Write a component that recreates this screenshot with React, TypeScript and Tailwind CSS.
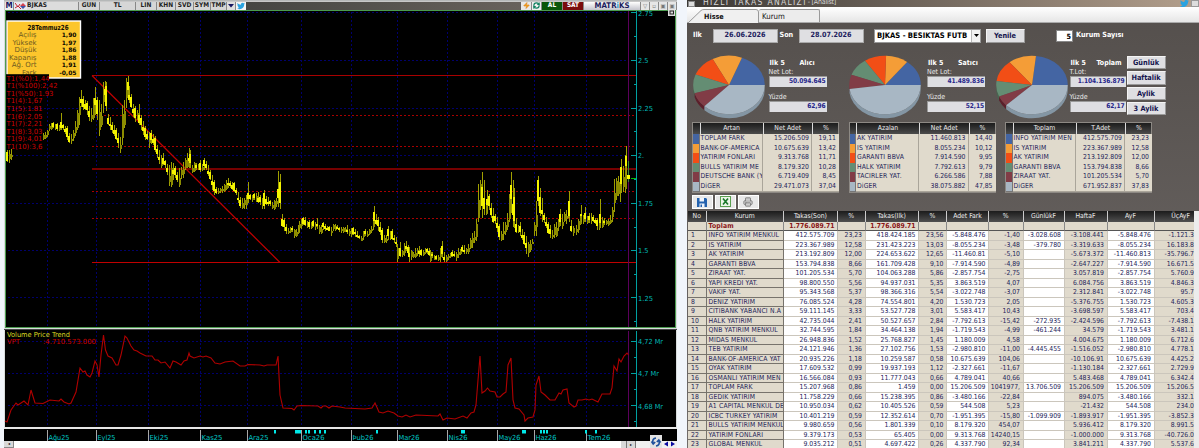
import React from "react";
import { Printer, RefreshCw, Zap } from "lucide-react";
import { FaTwitter } from "react-icons/fa";

// x, high, low in chart pixels
const CANDLES = `7 150 162;9 150 163;11 149 160;43 133 140;45 132 139;47 130 137;49 124 131;51 123 130;53 122 128;55 124 130;57 123 131;59 125 131;61 113 130;63 124 130;65 126 134;67 126 140;69 133 143;71 134 144;73 130 141;75 121 136;77 110 130;79 97 125;81 90 107;83 96 110;85 100 110;87 101 115;89 106 121;91 108 122;93 98 120;95 87 115;97 97 120;99 100 136;101 104 127;103 82 113;105 81 100;106 82 111;108 114 125;110 117 130;112 122 133;114 125 136;116 128 140;118 133 148;120 137 153;122 105 145;124 100 128;126 78 108;128 76 95;129 86 103;131 94 108;133 104 117;135 106 122;137 110 120;139 104 125;141 115 130;143 121 135;145 126 140;147 131 140;149 132 148;151 130 144;153 134 145;155 136 152;157 145 158;159 150 164;161 155 168;163 153 165;165 160 168;167 164 175;169 165 186;171 162 187;173 163 180;175 166 178;177 172 182;179 168 187;181 167 179;183 162 178;185 158 170;187 153 168;189 148 168;190 150 168;192 165 173;194 162 172;196 163 170;198 164 170;200 160 172;202 164 171;204 158 170;206 161 170;208 165 176;210 170 180;212 175 190;214 180 195;216 187 194;218 188 194;220 188 193;222 186 193;224 184 192;226 180 190;228 178 188;230 181 188;232 182 190;234 182 192;236 188 195;238 192 203;240 197 208;242 198 209;244 198 209;246 195 209;248 182 203;250 194 200;252 195 202;254 193 200;256 193 202;258 192 203;260 195 205;262 198 209;264 190 209;266 196 205;268 197 206;270 200 206;272 202 209;274 200 210;276 198 207;278 171 207;280 174 209;282 214 227;284 218 231;286 224 234;288 228 234;290 227 233;292 226 232;294 229 238;296 229 237;298 225 234;299 221 232;301 219 229;303 217 225;305 217 226;307 221 228;309 220 229;311 222 229;313 220 227;315 222 230;317 218 229;319 225 234;321 225 234;323 222 230;325 224 231;327 226 230;329 226 231;331 227 236;333 224 231;335 224 231;337 225 229;339 227 232;341 227 233;343 227 233;345 227 232;347 225 234;349 229 236;351 228 237;353 227 235;355 229 237;357 231 238;359 235 239;361 236 241;363 231 240;365 229 236;367 231 237;369 229 235;371 226 233;373 220 230;374 206 224;376 214 225;378 217 231;380 222 235;382 228 243;384 235 243;386 235 243;388 226 240;390 231 240;392 229 240;394 235 243;396 237 247;397 244 262;400 242 257;402 250 257;404 243 256;406 241 251;408 245 254;409 247 262;411 250 260;413 252 258;415 248 258;417 248 256;419 246 257;421 249 256;423 250 256;425 248 254;427 248 254;429 248 256;430 250 262;432 252 258;434 255 260;436 255 260;438 255 261;440 248 262;442 241 258;444 252 262;446 255 262;448 254 260;450 253 258;452 250 257;454 251 257;456 252 261;458 248 258;460 249 255;462 245 252;464 245 254;466 248 254;468 244 254;470 238 249;472 233 248;474 231 243;476 219 241;478 184 222;480 180 210;482 172 218;484 180 215;486 201 215;487 190 213;489 194 210;491 203 218;493 208 223;495 214 224;497 217 232;499 224 240;501 231 241;503 222 240;505 222 235;507 213 230;509 194 222;511 172 213;513 180 227;514 188 228;516 218 233;518 225 233;520 222 236;522 229 240;524 232 245;526 236 254;528 242 257;530 240 252;532 239 244;534 222 236;536 201 236;538 176 206;540 188 216;542 198 222;544 213 223;546 217 228;548 222 234;550 225 238;552 230 239;554 224 238;556 222 237;558 219 231;560 209 226;562 214 229;564 212 222;566 210 224;568 205 218;569 191 222;571 220 232;573 226 236;576 225 235;578 219 233;580 215 225;581 205 222;583 215 224;585 207 222;587 216 224;589 213 223;591 213 224;593 215 222;595 218 224;597 218 230;599 222 230;600 199 228;602 217 228;604 218 225;606 220 225;608 219 226;610 215 224;612 207 222;614 179 212;616 178 200;618 176 196;620 170 202;621 159 193;623 166 192;625 155 193;626 146 176;628 174 180`
  .split(";")
  .map((c) => c.split(" ").map(Number));

const VPT =
  "5,421 7,422 11,410 16,403 18,405 24,401 28,405 31,390 35,403 43,403.5 50,400 59,401 61,399 64,402 69,404 71,403 76,392 80,368 83,372 85,371 87,375 90,377 92,373 95,361 97,365 99,377 101,355 103.5,335 105.5,350 108,356 112,358 116,365 118,365 121,355 125,336 127,338 131,346 134,350 137,351 140,353 146,356 152,356 155,360 158,360 161,363 165,362 170,368 173,361 176,362 181,365 184,361 187,360 189,353 190,356 194,358 200,356 203,357 206,356 211,358 215,363 220,364 225,362 233,361 240,366 245,366 248,364.5 260,365 264,366 267,365 276,365 278,356 280,395 283,408 292,408.5 294,410 297,406 301,405.5 318,406 321,408 323,406 326,406 329,408 332,406 340,407 345,408 365,409 372,408 375,403 379,412 383,413 388,411 394,413 398,416 402,417 406,415 410,417 416,415 438,416 440,414 443,420 447,418 455,419 463,416 467,418 471,413 474,412 476,405 478,380 480,356 482,393 485,391 487.5,388 490,391 495,392 497,397 500,397 503,394 506,392 508,365 511,358 513,400 515,408 519,409 524,415 525,421 528,418 533,417 535,410 536,385 539,376 541,392 545,395 550,400 555,400 559,393 561,394 563,390 567,389 569,403 574,407 576,406 578,400 582,400 586,399 589,400 592,399 598,402 602,394 610,394 612,388 614,366 617,371 619,359 621,362 624,356 627,353 628.5,355";

const MONTHS: [number, string, number][] = [
  [47, "Ağu25", 21], [96, "Eyl25", 18], [148, "Eki25", 19], [200, "Kas25", 21],
  [247, "Ara25", 20], [301, "Oca26", 22], [351, "Þub26", 21], [397, "Mar26", 21],
  [447, "Nis26", 19], [497, "May26", 22], [534, "Haz26", 21], [586, "Tem26", 23],
];

const EVENTS = [
  [274, 2], [295, 6], [305, 2], [308, 2], [314, 2], [319, 2], [324, 2], [376, 2], [461, 4],
  [522, 4], [540, 2], [543, 2], [546, 2], [585, 2], [595, 2],
];

const LEVELS: [string, number][] = [
  ["T1(%0):1,44", 43], ["T1(%100):2,42", 51], ["T1(%50):1.93", 47], ["T1(4):1,67", 36], ["T1(5):1.81", 36],
  ["T1(6):2,05", 36], ["T1(7):2,21", 36], ["T1(8):3,03", 36], ["T1(9):4,01", 36], ["T1(10):3,6", 36],
];

const OHLC: [string, string][] = [
  ["Açılış", "1,90"], ["Yüksek", "1,97"], ["Düşük", "1,86"], ["Kapanış", "1,88"], ["Ağ. Ort", "1,91"], ["Fark", "-0,05"],
];

const COLORS = ["#4465a3", "#f49d37", "#f24e16", "#648d73", "#813c46", "#a8b7c4"];
const DARK = ["#2f4a80", "#b87326", "#b0360c", "#46664f", "#5c1f2b", "#8496a4"];

const GROUPS = [
  {
    head: ["Artan", "Net Adet", "%"], side: "Alıcı", lot: "Net Lot:", total: "50.094.645", pct: "62,96",
    rows: [["TOPLAM FARK", "15.206.509", "19,11"], ["BANK-OF-AMERICA", "10.675.639", "13,42"], ["YATIRIM FONLARI", "9.313.768", "11,71"], ["BULLS YATIRIM ME", "8.179.320", "10,28"], ["DEUTSCHE BANK (Y", "6.719.409", "8,45"], ["DiGER", "29.471.073", "37,04"]],
  },
  {
    head: ["Azalan", "Net Adet", "%"], side: "Satıcı", lot: "Net Lot:", total: "41.489.836", pct: "52,15",
    rows: [["AK YATIRIM", "11.460.813", "14,40"], ["IS YATIRIM", "8.055.234", "10,12"], ["GARANTI BBVA", "7.914.590", "9,95"], ["HALK YATIRIM", "7.792.613", "9,79"], ["TACIRLER YAT.", "6.266.586", "7,88"], ["DiGER", "38.075.882", "47,85"]],
  },
  {
    head: ["Toplam", "T.Adet", "%"], side: "Toplam", lot: "T.Lot:", total: "1.104.136.879", pct: "62,17",
    rows: [["INFO YATIRIM MEN", "412.575.709", "23,23"], ["IS YATIRIM", "223.367.989", "12,58"], ["AK YATIRIM", "213.192.809", "12,00"], ["GARANTI BBVA", "153.794.838", "8,66"], ["ZIRAAT YAT.", "101.205.534", "5,70"], ["DiGER", "671.952.837", "37,83"]],
  },
];

const HEAD = ["No", "Kurum", "Takas(Son)", "%", "Takas(Ilk)", "%", "Adet Fark", "%", "GünlükF", "HaftaF", "AyF", "ÜçAyF"];

const ROWS = `|Toplam|1.776.089.71||1.776.089.71|||||||
1|INFO YATIRIM MENKUL|412.575.709|23,23|418.424.185|23,56|-5.848.476|-1,40|-3.028.608|-3.108.441|-5.848.476|-1.121.3
2|IS YATIRIM|223.367.989|12,58|231.423.223|13,03|-8.055.234|-3,48|-379.780|-3.319.633|-8.055.234|16.183.8
3|AK YATIRIM|213.192.809|12,00|224.653.622|12,65|-11.460.81|-5,10||-5.673.372|-11.460.813|-35.796.7
4|GARANTI BBVA|153.794.838|8,66|161.709.428|9,10|-7.914.590|-4,89||-2.647.227|-7.914.590|16.671.5
5|ZIRAAT YAT.|101.205.534|5,70|104.063.288|5,86|-2.857.754|-2,75||3.057.819|-2.857.754|5.760.9
6|YAPI KREDI YAT.|98.800.550|5,56|94.937.031|5,35|3.863.519|4,07||6.084.756|3.863.519|4.846.3
7|VAKIF YAT.|95.343.568|5,37|98.366.316|5,54|-3.022.748|-3,07||2.312.841|-3.022.748|95.7
8|DENIZ YATIRIM|76.085.524|4,28|74.554.801|4,20|1.530.723|2,05||-5.376.755|1.530.723|4.605.3
9|CITIBANK YABANCI N.A|59.111.145|3,33|53.527.728|3,01|5.583.417|10,43||-3.698.597|5.583.417|703.4
10|HALK YATIRIM|42.735.044|2,41|50.527.657|2,84|-7.792.613|-15,42|-272.935|-2.424.596|-7.792.613|-7.438.1
11|QNB YATIRIM MENKUL|32.744.595|1,84|34.464.138|1,94|-1.719.543|-4,99|-461.244|34.579|-1.719.543|3.481.1
12|MIDAS MENKUL|26.948.836|1,52|25.768.827|1,45|1.180.009|4,58||4.004.675|1.180.009|6.712.6
13|TEB YATIRIM|24.121.946|1,36|27.102.756|1,53|-2.980.810|-11,00|-4.445.455|-1.516.052|-2.980.810|4.778.1
14|BANK-OF-AMERICA YAT|20.935.226|1,18|10.259.587|0,58|10.675.639|104,06||-10.106.91|10.675.639|4.425.2
15|OYAK YATIRIM|17.609.532|0,99|19.937.193|1,12|-2.327.661|-11,67||-1.130.184|-2.327.661|2.729.9
16|OSMANLI YATIRIM MEN|16.566.084|0,93|11.777.043|0,66|4.789.041|40,66||5.483.468|4.789.041|6.342.4
17|TOPLAM FARK|15.207.968|0,86|1.459|0,00|15.206.509|1041977,|13.706.509|15.206.509|15.206.509|15.206.5
18|GEDIK YATIRIM|11.758.229|0,66|15.238.395|0,86|-3.480.166|-22,84||894.075|-3.480.166|332.1
19|A1 CAPITAL MENKUL DE|10.950.034|0,62|10.405.526|0,59|544.508|5,23||-21.432|544.508|234.0
20|ICBC TURKEY YATIRIM|10.401.219|0,59|12.352.614|0,70|-1.951.395|-15,80|-1.099.909|-1.893.917|-1.951.395|-3.852.3
21|BULLS YATIRIM MENKUL|9.980.659|0,56|1.801.339|0,10|8.179.320|454,07||5.936.412|8.179.320|8.991.5
22|YATIRIM FONLARI|9.379.173|0,53|65.405|0,00|9.313.768|14240,15||-1.000.000|9.313.768|-40.726.0
23|GLOBAL MENKUL|9.035.212|0,51|4.697.422|0,26|4.337.790|92,34||3.841.211|4.337.790|5.537.6`
  .split("\n")
  .map((r) => r.split("|"));

const Candle = ({ c, i }: { c: number[]; i: number }) => {
  const [x, hi, lo] = c;
  const h = lo - hi;
  const top = Math.round(hi + h * (((i * 7) % 5) * 0.09 + 0.14));
  const bottom = Math.round(lo - h * (((i * 3) % 4) * 0.08 + 0.1));
  const next = CANDLES[i + 1] ?? c;
  const falling = next[1] + next[2] > hi + lo;
  return (
    <g>
      <rect x={x} y={hi} width="1" height={h} fill="#a0a000" />
      <rect x={x - (falling ? 1 : 0)} y={top} width={2} height={Math.max(2, bottom - top)} fill={falling ? "#f4f400" : "#8c8c00"} />
    </g>
  );
};

const Chart = () => (
  <svg width="677" height="431" viewBox="0 10 677 431" className="block" fontFamily="'DejaVu Sans', Verdana, sans-serif" fontSize="7">
    <rect x="4" y="10" width="673" height="431" fill="#d8dcdc" />
    <rect x="0" y="10" width="4" height="431" fill="#f1f5fb" />
    <g shapeRendering="crispEdges">
      <rect x="5" y="10" width="671" height="318" fill="#4c9c50" />
      <rect x="6" y="11" width="669" height="316" fill="#000" />
      <rect x="4" y="329" width="673" height="1" fill="#444" />
      <rect x="5" y="330" width="671" height="97" fill="#000" />
      <rect x="4" y="427" width="673" height="2" fill="#e6e6e6" />
      <rect x="4" y="429" width="673" height="12" fill="#000" />

      <g stroke="#00006c" strokeDasharray="2 2">
        {[12.5, 60.5, 108.5, 155.5, 203.5, 250.5, 297.5].map((y) => <line key={y} x1="8" x2="629" y1={y} y2={y} />)}
        {[341.5, 373.5, 405.5].map((y) => <line key={y} x1="8" x2="629" y1={y} y2={y} />)}
        {MONTHS.map(([x]) => (
          <g key={x}>
            <line x1={x + 0.5} x2={x + 0.5} y1="12" y2="327" />
            <line x1={x + 0.5} x2={x + 0.5} y1="331" y2="427" />
          </g>
        ))}
      </g>

      <g fill="#a80000">
        <rect x="92" y="75" width="544" height="1" />
        <rect x="92" y="168" width="544" height="2" fill="#760000" />
        <rect x="92" y="262" width="544" height="1" fill="#c00000" />
      </g>
      <g stroke="#a80000" strokeDasharray="2 2">
        {[115.5, 146.5, 191.5, 218.5].map((y) => <line key={y} x1="92" x2="636" y1={y} y2={y} />)}
      </g>
    </g>
    <line x1="92" y1="75.5" x2="280" y2="262.5" stroke="#c00000" strokeWidth="1.2" />

    <g shapeRendering="crispEdges">
      {CANDLES.map((c, i) => <Candle key={i} c={c} i={i} />)}
      <rect x="628" y="11" width="1" height="316" fill="#5c005c" />
      <rect x="628" y="331" width="1" height="96" fill="#5c005c" />
      <rect x="628" y="161" width="1" height="21" fill="#3a8a3a" />
      <rect x="627" y="175" width="3" height="4" fill="#ffff00" />
      <rect x="631" y="178" width="5" height="1" fill="#00c000" />
    </g>
    <polyline points={VPT} fill="none" stroke="#b00000" strokeWidth="1.1" />

    {/* price axis */}
    <g fill="#00a0a0" shapeRendering="crispEdges">
      <rect x="636" y="11" width="1" height="316" />
      <rect x="636" y="331" width="1" height="96" />
      {[12, 60, 108, 155, 203, 250, 297, 341, 373, 405].map((y) => <rect key={y} x="631" y={y} width="6" height="1" />)}
      {[36, 84, 131, 179, 227, 274, 321, 357, 389, 421].map((y) => <rect key={y} x="634" y={y} width="3" height="1" />)}
    </g>
    <g fill="#00b8b8">
      {["2.75", "2.5", "2.25", "2.", "1.75", "1.5", "1.25"].map((t, i) => (
        <text key={t} x="638" y={15.5 + i * 47.5} textLength={t.length === 4 ? 15 : t.length === 3 ? 10.5 : 6} lengthAdjust="spacingAndGlyphs">{t}</text>
      ))}
      {["4,72 Mr", "4,7 Mr", "4,68 Mr"].map((t, i) => (
        <text key={t} x="638" y={344 + i * 32.3} textLength={t.length === 7 ? 25 : 21} lengthAdjust="spacingAndGlyphs">{t}</text>
      ))}
    </g>
    <rect x="668" y="9" width="7" height="7" fill="#ddd" />
    <rect x="670" y="11" width="3.5" height="3" fill="none" stroke="#222" />

    {/* OHLC card and level labels */}
    <rect x="7" y="21" width="73.5" height="57" fill="#fcc62c" stroke="#fff" strokeWidth="1.4" />
    <g fill="#0e0a00" fontWeight="bold">
      <text x="27.5" y="29.5" textLength="41" lengthAdjust="spacingAndGlyphs">28Temmuz26</text>
      {OHLC.map(([, v], i) => <text key={i} x="76.5" y={36.9 + i * 7.6} textAnchor="end" fontSize="6">{v}</text>)}
    </g>
    <g fill="#6e5a20" textAnchor="end">
      {OHLC.map(([k], i) => <text key={k} x="36.5" y={37 + i * 7.6}>{k}</text>)}
    </g>
    <rect x="6" y="74.2" width="43" height="6.5" fill="#000" />
    <g fill="#d00000">
      {LEVELS.map(([t, w], i) => <text key={t} x="6.5" y={80.5 + i * 7.62} textLength={w} lengthAdjust="spacingAndGlyphs">{t}</text>)}
      <text x="7" y="344" textLength="13" lengthAdjust="spacingAndGlyphs">VPT</text>
      <text x="43" y="344" textLength="53" lengthAdjust="spacingAndGlyphs">:4.710.573.000</text>
    </g>
    <text x="7" y="337" fill="#dcdc20" textLength="63" lengthAdjust="spacingAndGlyphs">Volume Price Trend</text>

    {/* time axis */}
    {MONTHS.map(([x, t, w]) => (
      <g key={x}>
        <rect x={x} y="430" width="1" height="11" fill="#a8a8a8" />
        <text x={x + 1.5} y="440" fill="#00c4c4" textLength={w} lengthAdjust="spacingAndGlyphs">{t}</text>
      </g>
    ))}
    {EVENTS.map(([x, w]) => <rect key={x} x={x} y="430" width={w} height="3.5" fill="#00e8e8" />)}
  </svg>
);

const Tool = ({ className = "", children }: { className?: string; children?: React.ReactNode }) => (
  <div className={`h-[8px] shrink-0 overflow-hidden flex items-center justify-center border-r border-[#888] ${className}`}>{children}</div>
);

const ChartToolbar = () => (
  <div className="h-[10px] w-[677px] pl-[4px] bg-[#f1f5fb] flex">
    <div className="h-[10px] w-[673px] border-t border-[#b5b8b8] bg-[#c8c8c8] pl-px flex items-center text-[6.5px] font-bold leading-none text-[#222] font-['DejaVu_Sans_Condensed','DejaVu_Sans',sans-serif]">
      <Tool className="w-[9px] bg-[#eee] text-[8px] text-[#151560]">M</Tool>
      <Tool className="w-[13px] bg-[#e8e8ee] border-r-0">
        <svg width="12" height="8" viewBox="0 0 12 8">
          <path d="M0 1l3 4 2-3M0 6l3-2 3 3" stroke="#c02030" fill="none" />
          <path d="M5 4l3-3 3 3z" fill="#d04050" />
          <path d="M5 4l3 3 3-3z" fill="#4050a0" />
        </svg>
      </Tool>
      <Tool className="w-[52px] bg-[#dcdcdc] justify-start!">BJKAS</Tool>
      <Tool className="w-[21px] bg-[#d6d6d6]">GUN</Tool>
      <Tool className="w-[36px] bg-[#d6d6d6]">TL</Tool>
      <Tool className="w-[21px] bg-[#d6d6d6]">LIN</Tool>
      <Tool className="w-[19px] bg-[#d6d6d6]">KHN</Tool>
      <Tool className="w-[18px] bg-[#d6d6d6]">SVD</Tool>
      <Tool className="w-[17px] bg-[#d6d6d6]">SYM</Tool>
      <Tool className="w-[16px] bg-[#d6d6d6]">TMP</Tool>
      <Tool className="w-[9px] bg-[#dedede]">
        <svg width="6" height="4"><path d="M0 0h6L3 3.5z" fill="#151560" /></svg>
      </Tool>
      <Tool className="w-[10px] bg-[#f4f4f4] border-r-0"><FaTwitter size={8} color="#2aa3e0" /></Tool>
      <div className="h-[8px] flex-1 bg-linear-to-r from-[#454542] to-[#68625c]" />
      <Tool className="w-[11px] bg-[#e8e8e8]"><Zap size={7} fill="#f0a020" color="#e08010" /></Tool>
      <Tool className="w-[10px] bg-[#eee]"><RefreshCw size={7} color="#108060" strokeWidth={4} /></Tool>
      <Tool className="w-[21px] bg-[#0a560a] text-white">AL</Tool>
      <Tool className="w-[21px] bg-[#7a0c0c] text-white">SAT</Tool>
      <Tool className="w-[57px] bg-linear-to-b from-white to-[#c4c4cc] text-[7.8px] text-[#1b1b5c]">
        MATR<span className="text-[#30a0d0]">i</span>KS
      </Tool>
      {["▽", "▫", "▣", "▣"].map((t, i) => (
        <Tool key={i} className="w-[9px] bg-[#e6e6e6] text-[6px] text-[#777]">{t}</Tool>
      ))}
    </div>
  </div>
);

const ScrollBar = () => (
  <div className="h-[7px] w-[677px] pl-[4px] bg-[#f1f5fb] flex">
    <div className="w-[10px] bg-[#d8d8d8] border-r border-b border-[#888] flex items-center justify-center text-[4px] leading-none">◂</div>
    <div className="w-[607px] bg-white" />
    <div className="w-[6px] bg-[#d8d8d8] border-r border-[#777]" />
    <div className="w-[9px] bg-[#d8d8d8] border-r border-[#777] flex items-center justify-center text-[4px] leading-none">▸</div>
    <div className="flex-1 bg-[#f0f0f0]" />
  </div>
);

const Pie = ({ values, id }: { values: number[]; id: number }) => {
  const sum = values.reduce((a, b) => a + b, 0);
  const pt = (a: number, dy = 0) => `${(36 + 35.8 * Math.cos(a)).toFixed(2)} ${(30 - 29.3 * Math.sin(a) + dy).toFixed(2)}`;
  let angle = 0;
  const slices = values.map((v, i) => {
    const from = angle;
    angle += (v / sum) * Math.PI * 2;
    return { from, to: angle, i };
  });
  return (
    <svg width="72" height="65" viewBox="0 0 72 65" className="shrink-0">
      {slices.filter((s) => s.to > Math.PI).map(({ from, to, i }) => {
        const a = Math.max(from, Math.PI);
        return <path key={`${id}-${i}`} d={`M${pt(a)}A35.8 29.3 0 0 0 ${pt(to)}L${pt(to, 4)}A35.8 29.3 0 0 1 ${pt(a, 4)}Z`} fill={DARK[i]} />;
      })}
      {slices.map(({ from, to, i }) => (
        <path key={i} d={`M36 30L${pt(from)}A35.8 29.3 0 ${to - from > Math.PI ? 1 : 0} 0 ${pt(to)}Z`} fill={COLORS[i]} />
      ))}
    </svg>
  );
};

const Field = ({ value }: { value: string }) => (
  <div className="h-[11px] border-t border-l border-[#999] bg-[#dedee2] pr-px flex items-center justify-end text-[6.6px] font-bold tracking-[-0.1px] text-[#26268a]">
    {value}
  </div>
);

const Stats = ({ g, wide }: { g: (typeof GROUPS)[number]; wide?: boolean }) => (
  <div className={`pt-[4px] shrink-0 text-[#e8e8e8] ${wide ? "w-[56px]" : "w-[58px]"}`}>
    <div className="h-[8.5px] pl-px flex items-center text-[7px] font-bold text-white">
      <span className={wide ? "w-[26px]" : "w-[30px]"}>Ilk 5</span>
      <span>{g.side}</span>
    </div>
    <div className="h-[8.5px] flex items-center text-[7px]">{g.lot}</div>
    <Field value={g.total} />
    <div className="h-[14px] pt-[7px] flex items-center text-[7px]">Yüzde</div>
    <Field value={g.pct} />
  </div>
);

const Btn = ({ className, children }: { className: string; children: React.ReactNode }) => (
  <button className={`shrink-0 border border-[#f4f4f4] border-r-[#999] border-b-[#999] bg-[#dfdfe2] text-[7.3px] font-bold leading-none text-[#15154e] ${className}`}>
    {children}
  </button>
);

const GROUP_GRID = "grid grid-cols-[6.5px_63px_49.5px_27px]";

const GroupTable = ({ g }: { g: (typeof GROUPS)[number] }) => (
  <div className="h-[71px] w-[147px] shrink-0 border border-[#8d8984] bg-[#8d8984]">
    <div className={`${GROUP_GRID} h-[11px] items-center bg-linear-to-b from-[#1c1c1c] to-[#4c4c4c] text-center text-[6.8px] text-[#eee]`}>
      <div className="h-full" />
      {g.head.map((h) => (
        <div key={h} className="h-full border-l border-[#ddd] flex items-center justify-center">{h}</div>
      ))}
    </div>
    {g.rows.map(([name, n, p], i) => (
      <div key={i} className={`${GROUP_GRID} h-[9.5px] text-[6.8px] leading-[9.5px] text-[#25255a]`}>
        <div className="border-b border-r border-[#777]" style={{ background: COLORS[i] }} />
        <div className="overflow-hidden whitespace-nowrap border-b border-r border-[#aaa59a] bg-[#e0dacc] pl-[1px] tracking-[0.15px]">{name}</div>
        <div className="border-b border-r border-[#aaa59a] bg-[#e0dacc] pr-[2px] text-right">{n}</div>
        <div className="border-b border-[#aaa59a] bg-[#e0dacc] pr-[3px] text-right">{p}</div>
      </div>
    ))}
  </div>
);

const MAIN_GRID = "grid grid-cols-[18.5px_77.5px_54px_27.5px_53.5px_28px_42px_34.5px_41px_43px_47px_39.5px]";

const MainTable = () => (
  <div className="w-[506px] overflow-hidden text-[6.8px] text-[#25255a]">
    <div className={`${MAIN_GRID} h-[11px] bg-linear-to-b from-[#1c1c1c] to-[#505050] text-[#eee]`}>
      {HEAD.map((h, i) => (
        <div key={i} className={`border-r border-[#ccc] flex items-center ${i === 11 ? "justify-end border-r-0 pr-[4px]" : "justify-center"}`}>{h}</div>
      ))}
    </div>
    {ROWS.map((r, k) => (
      <div key={k} className={`${MAIN_GRID} h-[9.486px] leading-[9.5px]`}>
        {r.map((v, i) => {
          const white = k > 0 && [2, 4, 6, 8, 10].includes(i);
          const edge = k === 0 ? "border-b border-r border-r-[#888] border-b-[#555]" : i < 2 ? "border-b border-r border-[#77736c]" : "border-b border-r border-[#cbc6bc]";
          const align = i === 0 ? "pl-[3px]" : i === 1 ? "pl-[2px] tracking-[0.15px]" : i === 11 ? "text-right border-r-0" : "text-right pr-[2.5px]";
          return (
            <div
              key={i}
              className={`overflow-hidden whitespace-nowrap ${edge} ${align} ${white ? "bg-white" : "bg-[#e0dacc]"} ${k === 0 ? "font-bold text-[#8a1414]" : ""}`}
            >
              {v}
            </div>
          );
        })}
      </div>
    ))}
  </div>
);

const DateBox = ({ value }: { value: string }) => (
  <div className="h-[14px] w-[65px] shrink-0 border border-[#aaa] bg-[#dfdfe2] flex items-center justify-center text-[7.2px] font-bold text-[#1d1d5e]">{value}</div>
);

const Analysis = () => (
  <div className="h-[448px] w-[512px] flex flex-col bg-linear-to-b from-[#544f4c] to-[#706b69] font-['DejaVu_Sans_Condensed','DejaVu_Sans',sans-serif]">
    <div className="h-[7px] shrink-0 overflow-hidden bg-linear-to-r from-[#3c3936] to-[#b4a08d] flex items-center justify-between">
      <div className="flex items-center whitespace-nowrap">
        <div className="ml-px h-[6px] w-[7px] border border-[#888] bg-[#ddd]" />
        <div className="ml-[8px] -mt-[2px] text-[8.5px] leading-none tracking-[1.300px] text-[#d8d8d8]">HIZLI TAKAS ANALİZİ</div>
        <div className="ml-px -mt-[2px] text-[7px] leading-none tracking-[-0.2px] text-[#d8d8d8]">- [Analist]</div>
      </div>
      <div className="flex items-center">
        <FaTwitter size={9} color="#2aa3e0" />
        <div className="ml-[2px] h-[7px] w-[8px] border border-[#999] bg-[#ddd]" />
      </div>
    </div>
    <div className="h-[16px] shrink-0 bg-linear-to-b from-white to-[#e6e6e6] border-b border-[#aaa] pt-[2px] flex">
      <div className="relative h-[14px] w-[72px]">
        <svg width="72" height="14" className="absolute inset-0">
          <path d="M1 14L14 1.5Q15 .5 17 .5H69Q71.500 .5 71.500 3V14" fill="#f0f0f0" stroke="#999" />
        </svg>
        <div className="relative pl-[17px] pt-[3px] text-[7.2px] font-bold leading-[9px] text-[#111]">Hisse</div>
      </div>
      <div className="h-[13px] w-[61px] rounded-t-[2px] border-t border-r border-[#999] bg-[#ececec] pl-[3px] pt-[2px] text-[7.8px] leading-[9px] text-[#111]">Kurum</div>
    </div>

    <div className="h-[24px] shrink-0 pt-[1px] pl-[6px] flex items-center text-[7.2px] font-bold text-white">
      <div className="w-[19.500px]">Ilk</div>
      <DateBox value="26.06.2026" />
      <div className="w-[21px] pl-[2px]">Son</div>
      <DateBox value="28.07.2026" />
      <div className="ml-[10.500px] h-[14px] w-[107px] shrink-0 border border-[#999] bg-white flex items-center text-[7.6px] text-black">
        <div className="flex-1 overflow-hidden whitespace-nowrap pl-[2px]">BJKAS - BESIKTAS FUTB</div>
        <div className="h-full w-[9px] border-l border-[#bbb] bg-[#f2f2f2] flex items-center justify-center">
          <svg width="5" height="3"><path d="M0 0h5L2.500 3z" /></svg>
        </div>
      </div>
      <Btn className="ml-[4.500px] h-[14px] w-[39px]">Yenile</Btn>
      <div className="ml-[31px] h-[12px] w-[17.500px] border border-[#888] bg-white pr-px text-right text-[7.2px] leading-[11px] text-black">5</div>
      <div className="pl-[3px] whitespace-nowrap">Kurum Sayısı</div>
    </div>

    <div className="mt-[8px] h-[66px] shrink-0 pl-[5.500px] flex">
      {GROUPS.map((g, i) => (
        <div key={i} className={`flex shrink-0 ${i === 0 ? "w-[156.500px]" : i === 1 ? "w-[146.500px]" : "w-[131px]"}`}>
          <Pie id={i} values={g.rows.map((r) => parseFloat(r[2].replace(",", ".")))} />
          <div className={i === 0 ? "w-[4px]" : i === 1 ? "w-[6px]" : "w-[2px]"} />
          <Stats g={g} wide={i === 2} />
        </div>
      ))}
      <div className="pt-px flex flex-col gap-[2px]">
        {["Günlük", "Haftalik", "Aylik", "3 Aylik"].map((t) => (
          <Btn key={t} className="h-[13.300px] w-[39px]">{t}</Btn>
        ))}
      </div>
    </div>

    <div className="mt-px h-[71.500px] shrink-0 pl-[5px] flex gap-[9.500px]">
      {GROUPS.map((g, i) => <GroupTable key={i} g={g} />)}
    </div>

    <div className="h-[17.500px] shrink-0 pl-[4.500px] pt-[1px] flex gap-[2px]">
      <div className="h-[14.500px] w-[21px] bg-[#e8e8e8] border border-white flex items-center justify-center">
        <svg width="10" height="10" viewBox="0 0 10 10">
          <path d="M0 1h9l1 1v8H0z" fill="#2462ae" />
          <path d="M2.500 1h4.500v3.500H2.500zM2.500 6.500h5V10h-5z" fill="#eef3fb" />
          <path d="M3.500 7.500h1.500V10H3.500z" fill="#2462ae" />
        </svg>
      </div>
      <div className="h-[14.500px] w-[21px] bg-[#e8e8e8] border border-white flex items-center justify-center">
        <svg width="11" height="11" viewBox="0 0 11 11">
          <rect x=".5" y=".5" width="10" height="10" fill="#eef6ea" stroke="#5aa050" />
          <path d="M3 2.500l5 6M8 2.500l-5 6" stroke="#1d7a2c" strokeWidth="1.700" />
        </svg>
      </div>
      <div className="h-[14.500px] w-[21px] bg-[#e8e8e8] border border-white flex items-center justify-center">
        <Printer size={10} color="#777" fill="#ccc" />
      </div>
    </div>

    <div className="h-[237px] shrink-0 overflow-hidden pl-px flex">
      <MainTable />
      <div className="flex-1 bg-[#ececec]" />
    </div>
  </div>
);

const App = () => (
  <div className="h-[448px] w-[1199px] overflow-hidden bg-[#f1f5fb] flex">
    <div className="relative w-[677px] shrink-0">
      <ChartToolbar />
      <Chart />
      <ScrollBar />
      {/* refresh and paging controls float over the axis corner */}
      <div className="absolute left-[650px] top-[435px] h-[13px] w-[27px] flex items-end">
        <div className="h-[13px] w-[12px] bg-[#e2e2e2] flex items-center justify-center">
          <svg width="10" height="10" viewBox="0 0 10 10" fill="none" stroke="#1c4f9c" strokeWidth="1.600">
            <path d="M5 1Q1 1.500 2 6M.5 4.500L2.200 7l2-2M5 9Q9 8.500 8 4M9.500 5.500L7.800 3l-2 2" />
          </svg>
        </div>
        <svg width="15" height="8"><path d="M6 1.500v5L2 4zM9 1.500v5l4-2.500z" fill="#0a0aa0" /></svg>
      </div>
    </div>
    <div className="w-[10px] shrink-0" />
    <Analysis />
  </div>
);

export default App;
